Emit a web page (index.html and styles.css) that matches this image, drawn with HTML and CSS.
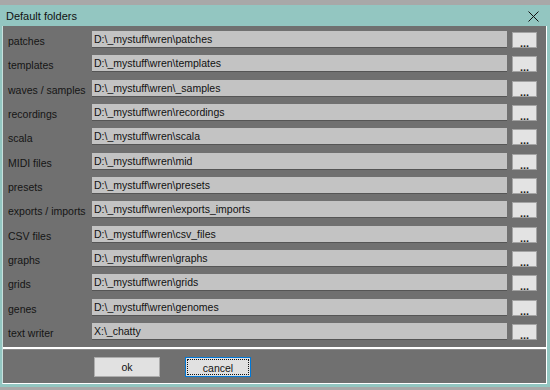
FILE: index.html
```html
<!DOCTYPE html>
<html lang="en">
<head>
  <meta charset="UTF-8">
  <title>Default folders</title>
  <link rel="stylesheet" href="styles.css">
</head>
<body>

  <div class="window">
    <div class="titlebar">
      <span class="title">Default folders</span>
      <span class="close">
        <svg width="11" height="11" viewBox="0 0 11 11">
          <path d="M0.5 0.5 L10.5 10.5 M10.5 0.5 L0.5 10.5" stroke="#111" stroke-width="1" fill="none"/>
        </svg>
      </span>
    </div>

    <div class="client">
      <!-- folder rows -->
      <div class="rows">
        <div class="row"><span class="label">patches</span><div class="field">D:\_mystuff\wren\patches</div><button class="browse">...</button></div>
        <div class="row"><span class="label">templates</span><div class="field">D:\_mystuff\wren\templates</div><button class="browse">...</button></div>
        <div class="row"><span class="label">waves / samples</span><div class="field">D:\_mystuff\wren\_samples</div><button class="browse">...</button></div>
        <div class="row"><span class="label">recordings</span><div class="field">D:\_mystuff\wren\recordings</div><button class="browse">...</button></div>
        <div class="row"><span class="label">scala</span><div class="field">D:\_mystuff\wren\scala</div><button class="browse">...</button></div>
        <div class="row"><span class="label">MIDI files</span><div class="field">D:\_mystuff\wren\mid</div><button class="browse">...</button></div>
        <div class="row"><span class="label">presets</span><div class="field">D:\_mystuff\wren\presets</div><button class="browse">...</button></div>
        <div class="row"><span class="label">exports / imports</span><div class="field">D:\_mystuff\wren\exports_imports</div><button class="browse">...</button></div>
        <div class="row"><span class="label">CSV files</span><div class="field">D:\_mystuff\wren\csv_files</div><button class="browse">...</button></div>
        <div class="row"><span class="label">graphs</span><div class="field">D:\_mystuff\wren\graphs</div><button class="browse">...</button></div>
        <div class="row"><span class="label">grids</span><div class="field">D:\_mystuff\wren\grids</div><button class="browse">...</button></div>
        <div class="row"><span class="label">genes</span><div class="field">D:\_mystuff\wren\genomes</div><button class="browse">...</button></div>
        <div class="row"><span class="label">text writer</span><div class="field">X:\_chatty</div><button class="browse">...</button></div>
      </div>

      <!-- ok / cancel -->
      <div class="actions">
        <button class="action">ok</button>
        <button class="action focused"><span>cancel</span></button>
      </div>
    </div>
  </div>

</body>
</html>
```

FILE: styles.css
```css
body {
  margin: 0;
  background-color: #a8a8a8;
  font-family: 'Liberation Sans', Arial, sans-serif;
  font-size: 10.5px;
  color: #111;
  overflow: hidden;
}
.window {
  margin-top: 5px;
  width: 556px;
  background: #93c6c1;
  padding: 0 0 3px 2px;
}
.titlebar {
  height: 21px;
  display: flex;
  align-items: center;
  justify-content: space-between;
  padding: 0 11px 0 4px;
  width: 533px;
}
.title {
  font-size: 11px;
  color: #111;
  padding-top: 1px;
}
.close {
  display: flex;
  margin-top: 2px;
}
.client {
  width: 543px;
  border-left: 1px solid #c8e0dd;
  border-right: 1px solid #fff;
  border-bottom: 1px solid #fff;
  background: #707070;
}
.rows {
  padding: 5px 0 0 0;
  border-bottom: 2px solid #fff;
}
.row {
  display: flex;
  align-items: flex-start;
  height: 24.35px;
}
.label {
  width: 84px;
  padding: 4px 0 0 5px;
  color: #151515;
  white-space: nowrap;
}
.field {
  width: 413px;
  height: 16px;
  line-height: 16px;
  padding-left: 2px;
  background: #c3c3c3;
  border-bottom: 1px solid #555;
  color: #111;
}
.browse {
  margin-left: 5px;
  margin-top: 1px;
  width: 25px;
  height: 16px;
  padding: 0;
  background: #e3e3e3;
  border: 1px solid #a4a4a4;
  font-family: 'Liberation Sans', Arial, sans-serif;
  font-size: 11px;
  font-weight: bold;
  line-height: 20px;
  color: #222;
  overflow: hidden;
}
.actions {
  height: 33px;
  display: flex;
  align-items: flex-start;
  gap: 25px;
  padding-left: 91px;
  border-top: 1px solid #888;
}
.action {
  margin-top: 7px;
  width: 66px;
  height: 20px;
  padding: 0;
  background: #e1e1e1;
  border: 1px solid #adadad;
  font-family: 'Liberation Sans', Arial, sans-serif;
  font-size: 10.5px;
  color: #111;
}
.focused {
  border: 1px solid #0078d7;
  padding: 1px;
}
.focused span {
  display: block;
  height: 100%;
  line-height: 16px;
  border: 1px dotted #111;
  box-sizing: border-box;
}
```
